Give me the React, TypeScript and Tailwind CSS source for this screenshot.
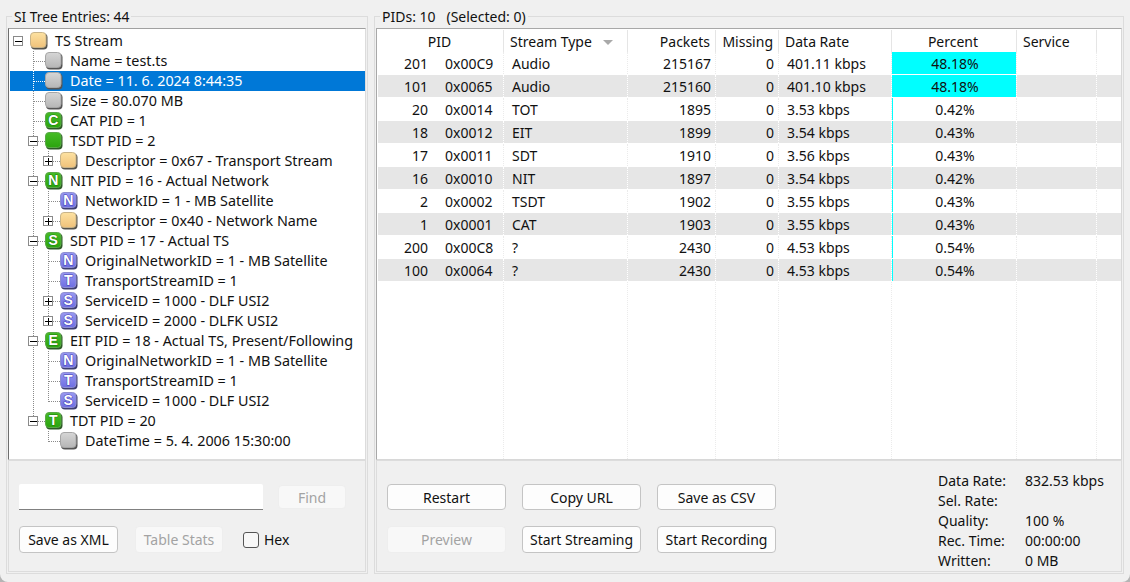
const font = "font-['Noto_Sans','Liberation_Sans',sans-serif]";

type Kind = "yellow" | "gray" | "green" | "blue";

type TreeNode = {
  level: 0 | 1 | 2;
  kind: Kind;
  letter?: string;
  label: string;
  expander?: "open" | "closed";
  last?: boolean;
  selected?: boolean;
  noTrunk?: boolean;
};

const treeRows: TreeNode[] = [
  { level: 0, kind: "yellow", label: "TS Stream", expander: "open" },
  { level: 1, kind: "gray", label: "Name = test.ts" },
  { level: 1, kind: "gray", label: "Date = 11. 6. 2024 8:44:35", selected: true },
  { level: 1, kind: "gray", label: "Size = 80.070 MB" },
  { level: 1, kind: "green", letter: "C", label: "CAT PID = 1" },
  { level: 1, kind: "green", label: "TSDT PID = 2", expander: "open" },
  { level: 2, kind: "yellow", label: "Descriptor = 0x67 - Transport Stream", expander: "closed", last: true },
  { level: 1, kind: "green", letter: "N", label: "NIT PID = 16 - Actual Network", expander: "open" },
  { level: 2, kind: "blue", letter: "N", label: "NetworkID = 1 - MB Satellite" },
  { level: 2, kind: "yellow", label: "Descriptor = 0x40 - Network Name", expander: "closed", last: true },
  { level: 1, kind: "green", letter: "S", label: "SDT PID = 17 - Actual TS", expander: "open" },
  { level: 2, kind: "blue", letter: "N", label: "OriginalNetworkID = 1 - MB Satellite" },
  { level: 2, kind: "blue", letter: "T", label: "TransportStreamID = 1" },
  { level: 2, kind: "blue", letter: "S", label: "ServiceID = 1000 - DLF USI2", expander: "closed" },
  { level: 2, kind: "blue", letter: "S", label: "ServiceID = 2000 - DLFK USI2", expander: "closed", last: true },
  { level: 1, kind: "green", letter: "E", label: "EIT PID = 18 - Actual TS, Present/Following", expander: "open" },
  { level: 2, kind: "blue", letter: "N", label: "OriginalNetworkID = 1 - MB Satellite" },
  { level: 2, kind: "blue", letter: "T", label: "TransportStreamID = 1" },
  { level: 2, kind: "blue", letter: "S", label: "ServiceID = 1000 - DLF USI2", last: true },
  { level: 1, kind: "green", letter: "T", label: "TDT PID = 20", expander: "open", last: true },
  { level: 2, kind: "gray", label: "DateTime = 5. 4. 2006 15:30:00", last: true, noTrunk: true },
];

const pidRows = [
  { pid: 201, hex: "0x00C9", type: "Audio", packets: 215167, rate: "401.11 kbps", percent: 48.18 },
  { pid: 101, hex: "0x0065", type: "Audio", packets: 215160, rate: "401.10 kbps", percent: 48.18 },
  { pid: 20, hex: "0x0014", type: "TOT", packets: 1895, rate: "3.53 kbps", percent: 0.42 },
  { pid: 18, hex: "0x0012", type: "EIT", packets: 1899, rate: "3.54 kbps", percent: 0.43 },
  { pid: 17, hex: "0x0011", type: "SDT", packets: 1910, rate: "3.56 kbps", percent: 0.43 },
  { pid: 16, hex: "0x0010", type: "NIT", packets: 1897, rate: "3.54 kbps", percent: 0.42 },
  { pid: 2, hex: "0x0002", type: "TSDT", packets: 1902, rate: "3.55 kbps", percent: 0.43 },
  { pid: 1, hex: "0x0001", type: "CAT", packets: 1903, rate: "3.55 kbps", percent: 0.43 },
  { pid: 200, hex: "0x00C8", type: "?", packets: 2430, rate: "4.53 kbps", percent: 0.54 },
  { pid: 100, hex: "0x0064", type: "?", packets: 2430, rate: "4.53 kbps", percent: 0.54 },
];

const palette: Record<Kind, { top: string; bottom: string; edge: string; rim: string; glyph: string }> = {
  yellow: { top: "#fde2a2", bottom: "#f0c27a", edge: "#55534c", rim: "#c8b48a", glyph: "#a07830" },
  gray: { top: "#d6d6d6", bottom: "#b6b6b6", edge: "#555555", rim: "#a6a6a6", glyph: "#707070" },
  green: { top: "#46bc26", bottom: "#2ba40e", edge: "#2f5a28", rim: "#5aa848", glyph: "#1c7a08" },
  blue: { top: "#9898f2", bottom: "#6e6ee2", edge: "#3e3e70", rim: "#8f8fd0", glyph: "#3c3cb0" },
};

function NodeIcon({ kind, letter }: { kind: Kind; letter?: string }) {
  const c = palette[kind];
  const id = `node-${kind}`;
  return (
    <svg width="18" height="18" viewBox="0 0 18 18" className="shrink-0">
      <defs>
        <linearGradient id={id} x1="0" y1="0" x2="0" y2="1">
          <stop offset="0" stopColor={c.top} />
          <stop offset="1" stopColor={c.bottom} />
        </linearGradient>
      </defs>
      <rect x="1" y="1.5" width="16.5" height="16" rx="4" fill={c.edge} />
      <rect x="0.5" y="0.5" width="15.5" height="15" rx="3.5" fill={`url(#${id})`} stroke={c.rim} />
      {letter && (
        <text
          x="8.2"
          y="13"
          textAnchor="middle"
          fontSize="14"
          fontWeight="700"
          fontFamily="'Liberation Sans', sans-serif"
          fill="#ffffff"
          stroke={c.glyph}
          strokeWidth="1"
          paintOrder="stroke"
        >
          {letter}
        </text>
      )}
    </svg>
  );
}

// dotted tree lines + the little +/- box, drawn in the row's left gutter
function Gutter({ row }: { row: TreeNode }) {
  const width = 20 + row.level * 15;
  const stroke = row.selected ? "#ffffff" : "#8a8a8a";
  const dots = "1 1";
  const trunk1 = 23.5;
  const trunk2 = 38.5;
  const mid = 10.5;
  const hasTrunk1 = row.level > 0 && !row.noTrunk;
  const boxCenter = row.level === 0 ? 8 : row.level === 1 ? 23 : 38;
  return (
    <svg width={width} height="20" className="shrink-0" shapeRendering="crispEdges">
      {hasTrunk1 && (
        <line x1={trunk1} y1="0" x2={trunk1} y2={row.level === 1 && row.last ? mid : 20} stroke={stroke} strokeDasharray={dots} />
      )}
      {row.level === 2 && (
        <line x1={trunk2} y1="0" x2={trunk2} y2={row.last ? mid : 20} stroke="#8a8a8a" strokeDasharray={dots} />
      )}
      {row.level === 1 && <line x1={trunk1} y1={mid} x2={width} y2={mid} stroke={stroke} strokeDasharray={dots} />}
      {row.level === 2 && <line x1={trunk2} y1={mid} x2={width} y2={mid} stroke="#8a8a8a" strokeDasharray={dots} />}
      {row.level === 1 && row.expander === "open" && (
        <line x1={trunk2} y1="16" x2={trunk2} y2="20" stroke="#8a8a8a" strokeDasharray={dots} />
      )}
      {row.expander && (
        <g>
          <rect x={boxCenter - 5 + 0.5} y="5.5" width="9" height="9" fill="#ffffff" stroke="#8a8a8a" />
          <line x1={boxCenter - 3} y1="10.5" x2={boxCenter + 4} y2="10.5" stroke="#000000" />
          {row.expander === "closed" && <line x1={boxCenter + 0.5} y1="7" x2={boxCenter + 0.5} y2="14" stroke="#000000" />}
        </g>
      )}
    </svg>
  );
}

function TreeRow({ row }: { row: TreeNode }) {
  return (
    <div className={row.selected ? "flex h-[20px] items-center bg-[#0078d7] text-white" : "flex h-[20px] items-center"}>
      <Gutter row={row} />
      <NodeIcon kind={row.kind} letter={row.letter} />
      <span className="ml-[7px] whitespace-nowrap text-[14.35px]">{row.label}</span>
    </div>
  );
}

function GroupBox({ title, className, children }: { title: React.ReactNode; className: string; children: React.ReactNode }) {
  return (
    <div className={`relative flex flex-col border border-[#dcdcdc] px-px pt-[11px] pb-px ${className}`}>
      <div className="absolute left-[5px] top-[-10px] whitespace-pre bg-[#f0f0f0] px-[2px] leading-[20px]">{title}</div>
      {children}
    </div>
  );
}

function WinButton({ label, disabled, className }: { label: string; disabled?: boolean; className: string }) {
  return (
    <button
      disabled={disabled}
      className={
        disabled
          ? `flex items-center justify-center rounded-[4px] border border-[#eeeeee] bg-[#f8f8f8] text-[#a3a3a3] ${className}`
          : `flex items-center justify-center rounded-[4px] border border-[#c4c4c4] bg-[#fdfdfd] ${className}`
      }
    >
      {label}
    </button>
  );
}

const cols = "grid grid-cols-[126px_124px_88px_63px_113px_125px_80px]";
const whiteCell = "flex items-center border-r border-dotted border-[#ebebeb] pt-[2px]";
const greyCell = "flex items-center border-r border-dotted border-white pt-[2px]";
const headCell = "flex items-center border-r border-[#e5e5e5] pt-[2px]";
const maxPercent = 48.18;

function PidTable() {
  return (
    <div className="flex h-[432px] flex-col border border-[#a8a8a8] border-r-[#d8d8d8] border-b-[#d8d8d8] bg-white pl-px pt-px">
      <div className={`${cols} h-[22px] shrink-0`}>
        <div className={`${headCell} justify-center pr-[2px]`}>PID</div>
        <div className={`${headCell} pl-[6px]`}>
          Stream Type
          <svg width="10" height="5" viewBox="0 0 10 5" className="ml-[11px]">
            <path d="M0 0H10L5 5Z" fill="#a9a9a9" />
          </svg>
        </div>
        <div className={`${headCell} justify-end pr-[5px]`}>Packets</div>
        <div className={`${headCell} justify-end pr-[5px]`}>Missing</div>
        <div className={`${headCell} pl-[6px]`}>Data Rate</div>
        <div className={`${headCell} justify-center pr-[2px]`}>Percent</div>
        <div className={`${headCell} pl-[6px]`}>Service</div>
      </div>
      {pidRows.map((r, i) => {
        const alt = i % 2 === 1;
        const cell = alt ? greyCell : whiteCell;
        return (
          <div key={r.pid} className={alt ? `${cols} mb-px h-[22px] shrink-0 bg-[#e6e6e6]` : `${cols} mb-px h-[22px] shrink-0`}>
            <div className={cell}>
              <span className="w-[50px] text-right">{r.pid}</span>
              <span className="ml-[17px]">{r.hex}</span>
            </div>
            <div className={`${cell} pl-[8px]`}>{r.type}</div>
            <div className={`${cell} justify-end pr-[4px]`}>{r.packets}</div>
            <div className={`${cell} justify-end pr-[4px]`}>0</div>
            <div className={`${cell} pl-[8px]`}>{r.rate}</div>
            <div className={`${cell} relative justify-center pl-[2px]`}>
              <div className="absolute inset-y-0 left-0 bg-[#00ffff]" style={{ width: `${(r.percent / maxPercent) * 124}px` }} />
              <span className="relative">{r.percent.toFixed(2)}%</span>
            </div>
            <div className={cell} />
          </div>
        );
      })}
      <div className={`${cols} min-h-0 flex-1`}>
        <div className={whiteCell} />
        <div className={whiteCell} />
        <div className={whiteCell} />
        <div className={whiteCell} />
        <div className={whiteCell} />
        <div className={whiteCell} />
        <div className={whiteCell} />
      </div>
    </div>
  );
}

export default function App() {
  return (
    <div className="h-[582px] w-[1130px] bg-[#b4b4b4]">
      <div className={`${font} flex h-[582px] w-[1130px] gap-[6px] overflow-hidden rounded-b-[8px] bg-[#f0f0f0] pl-[6px] pt-[16px] text-[14px] leading-[20px] text-[#111111]`}>
        <GroupBox title={<span className="text-[13.8px]">SI Tree Entries: 44</span>} className="h-[558px] w-[362px]">
          <div className="h-[432px] border border-[#a0a0a0] border-l-[#6e6e6e] border-r-[#dcdcdc] border-b-[#dcdcdc] bg-white pl-px pt-[2px]">
            {treeRows.map((row, i) => (
              <TreeRow key={i} row={row} />
            ))}
          </div>
          <div className="h-[112px] border border-[#dcdcdc] pl-[10px] pt-[23px]">
            <div className="flex items-start">
              <div className="h-[26px] w-[244px] rounded-t-[2px] border-b border-[#808080] bg-white" />
              <WinButton label="Find" disabled className="ml-[15px] mt-px h-[24px] w-[68px] pt-[1px]" />
            </div>
            <div className="mt-[16px] flex items-center">
              <WinButton label="Save as XML" className="h-[27px] w-[99px]" />
              <WinButton label="Table Stats" disabled className="ml-[17px] h-[27px] w-[88px]" />
              <div className="ml-[20px] h-[16px] w-[16px] rounded-[3px] border border-[#555555] bg-[#f8f8f8]" />
              <span className="ml-[5px]">Hex</span>
            </div>
          </div>
        </GroupBox>
        <GroupBox title={"PIDs: 10   (Selected: 0)"} className="h-[558px] w-[750px]">
          <PidTable />
          <div className="flex h-[112px] border border-[#dcdcdc] pl-[10px]">
            <div className="grid h-fit grid-cols-[119px_119px_119px] gap-x-[16px] gap-y-[16px] pt-[23px]">
              <WinButton label="Restart" className="h-[26px] w-[119px] pt-[2px]" />
              <WinButton label="Copy URL" className="h-[26px] w-[119px] pt-[2px]" />
              <WinButton label="Save as CSV" className="h-[26px] w-[119px] pt-[2px]" />
              <WinButton label="Preview" disabled className="h-[27px] w-[119px]" />
              <WinButton label="Start Streaming" className="h-[27px] w-[119px]" />
              <WinButton label="Start Recording" className="h-[27px] w-[119px]" />
            </div>
            <div className="ml-[162px] grid h-fit grid-cols-[87px_auto] pt-[10px]">
              <span>Data Rate:</span>
              <span>832.53 kbps</span>
              <span>Sel. Rate:</span>
              <span />
              <span>Quality:</span>
              <span>100 %</span>
              <span>Rec. Time:</span>
              <span>00:00:00</span>
              <span>Written:</span>
              <span>0 MB</span>
            </div>
          </div>
        </GroupBox>
      </div>
    </div>
  );
}
